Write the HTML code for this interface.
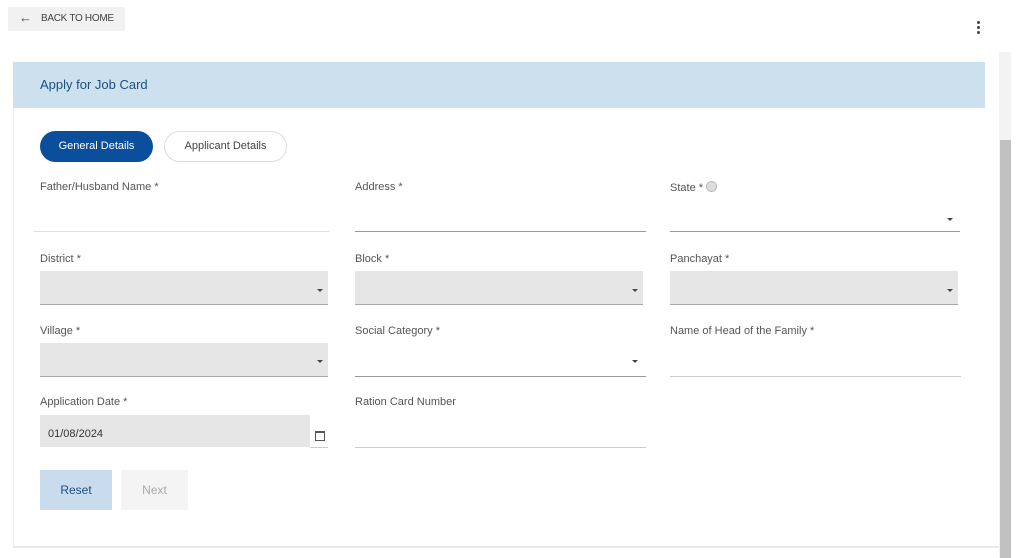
<html><head><style>
body{margin:0;width:1024px;height:558px;background:#fff;font-family:"Liberation Sans",sans-serif;position:relative;overflow:hidden}
.a{position:absolute}
.lbl{position:absolute;font-size:11px;color:#555}
.ul{position:absolute;height:1px;background:#999}
.box{position:absolute;background:#e6e6e6;border-bottom:1px solid #aaa}
.car{position:absolute;width:0;height:0;border-left:3px solid transparent;border-right:3px solid transparent;border-top:3px solid #444}
</style></head><body>
<div class="a" style="left:8px;top:7px;width:117px;height:24px;background:#f1f1f1;border-radius:2px"></div>
<div class="a" style="left:19px;top:10px;font-size:13px;color:#444">&#8592;</div>
<div class="a" style="left:41px;top:13px;font-size:10px;color:#444;letter-spacing:-0.3px">BACK TO HOME</div>
<div class="a" style="left:977px;top:21px;width:3px;height:3px;background:#444;border-radius:2px;box-shadow:0 5px 0 #444,0 10px 0 #444"></div>
<div class="a" style="left:13px;top:62px;width:986px;height:484px;border-left:1px solid #eee;border-bottom:2px solid #e8e8e8"></div>
<div class="a" style="left:13px;top:62px;width:972px;height:46px;background:#cde0ee"></div>
<div class="a" style="left:40px;top:77px;font-size:13px;color:#1d4f82">Apply for Job Card</div>
<div class="a" style="left:999px;top:52px;width:12px;height:506px;background:#f3f3f3"></div>
<div class="a" style="left:1000px;top:140px;width:11px;height:418px;background:#c1c1c1"></div>
<div class="a" style="left:40px;top:131px;width:113px;height:31px;background:#0b4f9c;border-radius:16px;color:#fff;font-size:11px;line-height:31px;text-align:center">General Details</div>
<div class="a" style="left:164px;top:131px;width:121px;height:29px;border:1px solid #ddd;border-radius:16px;color:#444;font-size:11px;line-height:29px;text-align:center">Applicant Details</div>

<div class="lbl" style="left:40px;top:181px">Father/Husband Name *</div>
<div class="ul" style="left:34px;top:231px;width:295px;background:#ddd"></div>
<div class="lbl" style="left:355px;top:181px">Address *</div>
<div class="ul" style="left:355px;top:231px;width:291px"></div>
<div class="lbl" style="left:670px;top:181px">State * <span style="display:inline-block;width:9px;height:9px;border-radius:50%;background:#ddd;border:1px solid #bbb;vertical-align:-1px"></span></div>
<div class="ul" style="left:670px;top:231px;width:290px"></div>
<div class="car" style="left:947px;top:218px"></div>

<div class="lbl" style="left:40px;top:253px">District *</div>
<div class="box" style="left:40px;top:271px;width:288px;height:33px"></div><div class="car" style="left:317px;top:289px"></div>
<div class="lbl" style="left:355px;top:253px">Block *</div>
<div class="box" style="left:355px;top:271px;width:288px;height:33px"></div><div class="car" style="left:632px;top:289px"></div>
<div class="lbl" style="left:670px;top:253px">Panchayat *</div>
<div class="box" style="left:670px;top:271px;width:288px;height:33px"></div><div class="car" style="left:947px;top:289px"></div>

<div class="lbl" style="left:40px;top:325px">Village *</div>
<div class="box" style="left:40px;top:343px;width:288px;height:33px"></div><div class="car" style="left:317px;top:360px"></div>
<div class="lbl" style="left:355px;top:325px">Social Category *</div>
<div class="ul" style="left:355px;top:376px;width:291px"></div><div class="car" style="left:632px;top:360px"></div>
<div class="lbl" style="left:670px;top:325px">Name of Head of the Family *</div>
<div class="ul" style="left:670px;top:376px;width:291px;background:#ccc"></div>

<div class="lbl" style="left:40px;top:396px">Application Date *</div>
<div class="box" style="left:40px;top:415px;width:270px;height:32px;border-bottom:none"></div>
<div class="a" style="left:48px;top:428px;font-size:11px;color:#333">01/08/2024</div>
<div class="a" style="left:315px;top:431px;width:8px;height:7px;border:1px solid #555;border-top-width:2px"></div>
<div class="ul" style="left:310px;top:447px;width:18px;background:#ccc"></div>
<div class="lbl" style="left:355px;top:396px">Ration Card Number</div>
<div class="ul" style="left:355px;top:447px;width:291px;background:#ccc"></div>

<div class="a" style="left:40px;top:470px;width:72px;height:40px;background:#c9dced;color:#1d4f82;font-size:12px;line-height:40px;text-align:center">Reset</div>
<div class="a" style="left:121px;top:470px;width:67px;height:40px;background:#f4f4f4;color:#aaa;font-size:12px;line-height:40px;text-align:center">Next</div>
</body></html>
